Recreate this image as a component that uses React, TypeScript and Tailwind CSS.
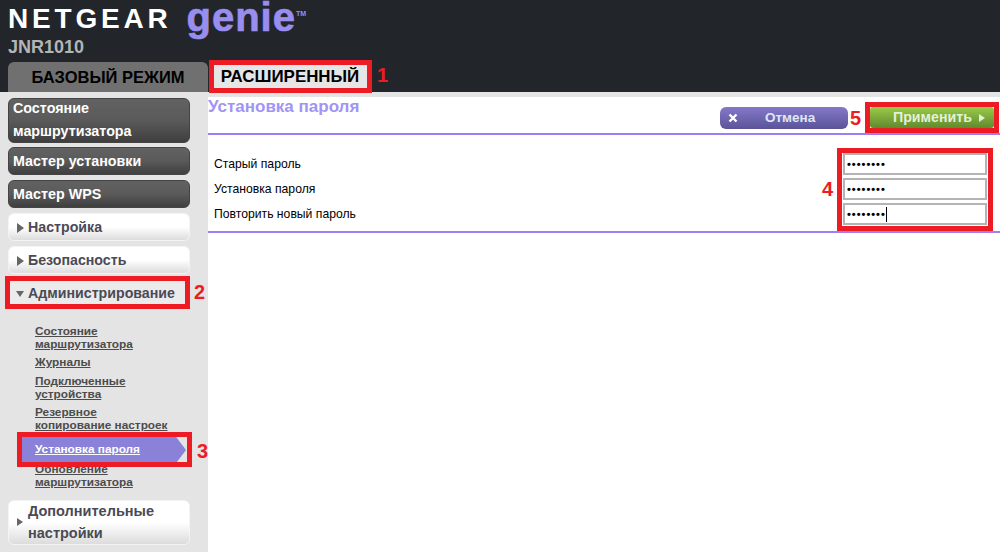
import React from 'react';

const font = { fontFamily: '"Liberation Sans", Arial, sans-serif' };

const DarkItem = ({ lines, className }: { lines: string[]; className: string }) => (
  <div className={`mx-2 w-[182px] rounded-md border border-[#444] bg-gradient-to-b from-[#626262] via-[#5a5a5a] to-[#3f3f3f] pl-[4px] text-[14.3px] font-bold text-white ${className}`}>
    {lines.map(l => <div key={l}>{l}</div>)}
  </div>
);

const LightItem = ({ label, className }: { label: string; className: string }) => (
  <div className={`mx-2 flex h-[28px] w-[182px] items-center rounded-md border border-[#f4f4f4] bg-gradient-to-b from-white via-white to-[#dcdcdc] pt-[2px] text-[14.2px] font-bold text-[#4a4a55] ${className}`}>
    <span className="ml-[8px] mr-[4px] h-0 w-0 border-y-[5px] border-l-[7px] border-y-transparent border-l-[#666]" />
    {label}
  </div>
);

const SubLink = ({ lines, className }: { lines: string[]; className?: string }) => (
  <div className={`ml-[35px] text-[11.8px] font-bold leading-[13px] text-[#4c4c4c] underline ${className ?? ''}`}>
    {lines.map(l => <div key={l}>{l}</div>)}
  </div>
);

const RedBox = ({ className }: { className: string }) => (
  <div className={`absolute border-[5px] border-[#ed1c24] ${className}`} />
);

const Num = ({ n, className }: { n: string; className: string }) => (
  <div className={`absolute text-[20px] font-bold leading-[20px] text-[#ed1c24] ${className}`}>{n}</div>
);

const PasswordField = ({ caret }: { caret?: boolean }) => (
  <div className="flex h-[22px] w-[144px] items-center border-2 border-[#b4b4b4] bg-white pl-[2px] leading-none text-black">
    <span className="text-[11px] font-bold tracking-[1px]">••••••••</span>
    {caret && <span className="h-[15px] w-px bg-black" />}
  </div>
);

export default function App() {
  return (
    <div className="relative h-[552px] w-[1000px] overflow-hidden bg-white" style={font}>
      {/* Header */}
      <div className="h-[92px] bg-[#22262a]">
        <div className="flex h-[38px] items-start pl-[8px]">
          <span className="mt-[3px] text-[28px] font-bold leading-[32px] tracking-[3.8px] text-white">NETGEAR</span>
          <span className="ml-[15px] mt-[1px] text-[40px] font-bold leading-[32px] tracking-[1px] text-[#9a8df0] [-webkit-text-stroke:0.7px_#9a8df0]">genie</span>
          <span className="mt-[10px] text-[7px] font-bold leading-[8px] text-[#9a8df0]">TM</span>
        </div>
        <div className="pl-[8px] text-[18px] font-bold leading-[18px] text-[#b4b4b4]">JNR1010</div>
        <div className="mt-[6px] flex items-end">
          <div className="ml-[8px] flex h-[30px] w-[200px] items-center justify-center rounded-t-md bg-[#707070] text-[16.5px] font-bold text-black">БАЗОВЫЙ РЕЖИМ</div>
          <div className="mb-[4px] ml-[5px] flex h-[23px] w-[154px] items-center justify-center bg-[#e6e6e6] text-[16.9px] font-bold text-black">РАСШИРЕННЫЙ</div>
        </div>
      </div>

      <div className="flex h-[460px]">
        {/* Sidebar */}
        <div className="h-full w-[208px] shrink-0 bg-[#e4e4e4] pt-[6px]">
          <DarkItem lines={['Состояние', 'маршрутизатора']} className="h-[45px] leading-[23px] [&>div:first-child]:mt-[-2px]" />
          <DarkItem lines={['Мастер установки']} className="mt-[4px] h-[28px] leading-[26px]" />
          <DarkItem lines={['Мастер WPS']} className="mt-[5px] h-[28px] leading-[26px]" />
          <LightItem label="Настройка" className="mt-[5px]" />
          <LightItem label="Безопасность" className="mt-[5px]" />
          <div className="mx-2 mt-[5px] flex h-[28px] w-[182px] items-center rounded-md bg-[#ebebeb] pt-[2px] text-[14.2px] font-bold text-[#4a4a55]">
            <span className="ml-[8px] mr-[4px] h-0 w-0 border-x-[4px] border-t-[6px] border-x-transparent border-t-[#666]" />
            Администрирование
          </div>
          <SubLink lines={['Состояние', 'маршрутизатора']} className="mt-[18px]" />
          <SubLink lines={['Журналы']} className="mt-[5px]" />
          <SubLink lines={['Подключенные', 'устройства']} className="mt-[6px]" />
          <SubLink lines={['Резервное', 'копирование настроек']} className="mt-[5px]" />
          <div className="ml-[22px] mt-[5px] flex h-[26px] w-[164px] items-center bg-[#8a82d8] pl-[13px] text-[11.8px] font-bold text-white underline [clip-path:polygon(0_0,94%_0,100%_50%,94%_100%,0_100%)]">
            Установка пароля
          </div>
          <SubLink lines={['Обновление', 'маршрутизатора']} />
          <div className="mx-2 mt-[11px] flex h-[45px] w-[182px] items-center rounded-md border border-[#f4f4f4] bg-gradient-to-b from-white via-white to-[#dcdcdc] pb-[2px] text-[14.5px] font-bold leading-[22px] text-[#4a4a55]">
            <span className="ml-[8px] mr-[5px] h-0 w-0 border-y-[4px] border-l-[6px] border-y-transparent border-l-[#666]" />
            <div>Дополнительные<br />настройки</div>
          </div>
        </div>

        {/* Content */}
        <div className="flex-1">
          <div className="h-[5px] bg-[#e4e4e4]" />
          <div className="flex h-[38px] items-start justify-between border-b-2 border-[#a07cf5]">
            <div className="text-[17px] font-bold leading-[20px] text-[#a094f5]">Установка пароля</div>
            <div className="mr-[6px] mt-[10px] flex items-start gap-[22px]">
              <div className="flex h-[22px] w-[128px] items-center rounded-md bg-gradient-to-b from-[#8479c9] to-[#5b5499] pl-[8px] text-[13.5px] font-bold text-[#dfe6f5]">
                <svg width="10" height="10" viewBox="0 0 10 10" className="shrink-0">
                  <path d="M1.5 1.5 8.5 8.5M8.5 1.5 1.5 8.5" stroke="#fff" strokeWidth="2.4" fill="none" />
                </svg>
                <span className="ml-[27px]">Отмена</span>
              </div>
              <div className="flex h-[21px] w-[124px] items-center rounded-[3px] bg-gradient-to-b from-[#9acb48] to-[#618a2e] pl-[23px] text-[14.2px] font-bold text-[#e4f0d8]">
                Применить
                <span className="ml-[7px] h-0 w-0 border-y-[4px] border-l-[6px] border-y-transparent border-l-[#e4f0d8]" />
              </div>
            </div>
          </div>
          <div className="flex h-[98px] flex-col gap-[3px] border-b-2 border-[#a07cf5] pt-[18px]">
            {[
              { label: 'Старый пароль' },
              { label: 'Установка пароля' },
              { label: 'Повторить новый пароль', caret: true },
            ].map(row => (
              <div key={row.label} className="flex items-center justify-between pl-[6px] pr-[13px] text-[12.2px] text-black">
                <span>{row.label}</span>
                <PasswordField caret={row.caret} />
              </div>
            ))}
          </div>
        </div>
      </div>

      {/* Annotations */}
      <RedBox className="left-[209px] top-[60px] h-[33px] w-[163px]" />
      <Num n="1" className="left-[377px] top-[65px]" />
      <RedBox className="left-[5px] top-[276px] h-[33px] w-[185px]" />
      <Num n="2" className="left-[194px] top-[282px]" />
      <RedBox className="left-[17px] top-[432px] h-[35px] w-[175px]" />
      <Num n="3" className="left-[197px] top-[441px]" />
      <RedBox className="left-[837px] top-[148px] h-[83px] w-[156px]" />
      <Num n="4" className="left-[822px] top-[179px]" />
      <RedBox className="left-[865px] top-[102px] h-[31px] w-[134px]" />
      <Num n="5" className="left-[850px] top-[108px]" />
    </div>
  );
}
